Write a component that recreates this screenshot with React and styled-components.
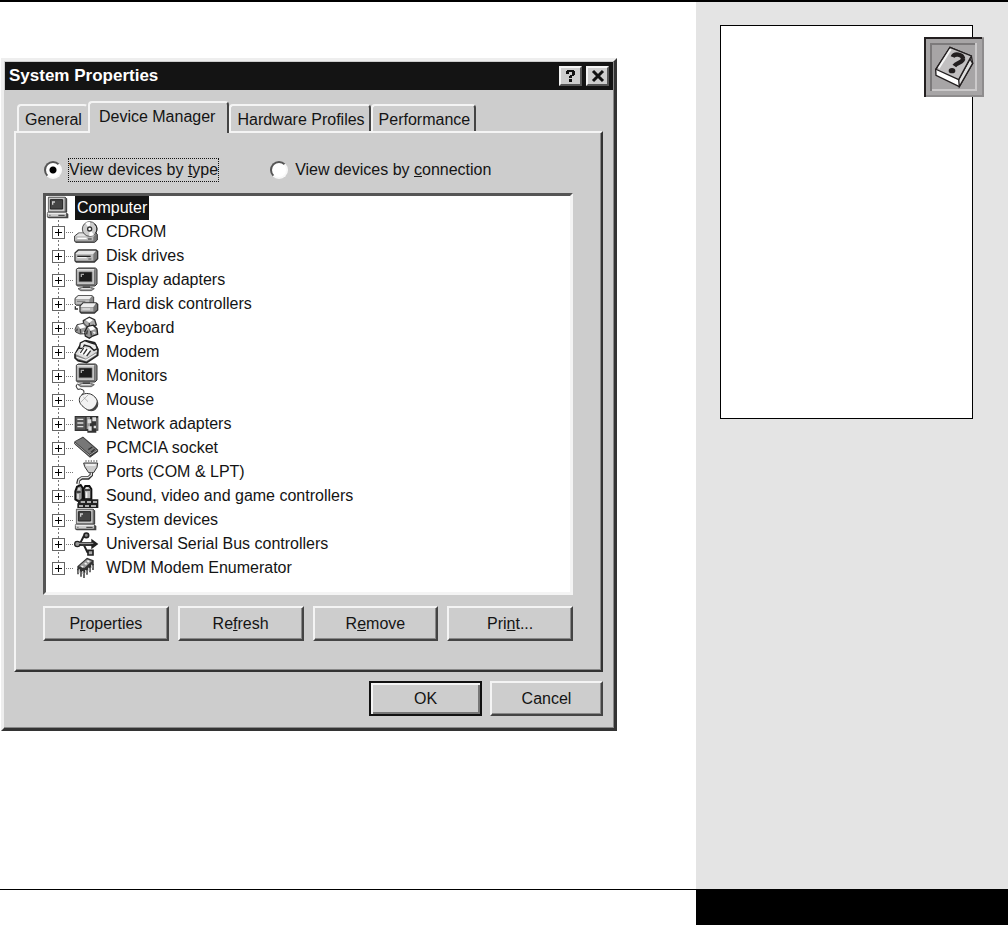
import { useState } from "react";
import styled, { createGlobalStyle } from "styled-components";

const GlobalStyle = createGlobalStyle`
  *,
  *::before,
  *::after {
    box-sizing: border-box;
  }
  body {
    margin: 0;
    background: #fff;
  }
  body, button, input {
    font-family: "Liberation Sans", Arial, sans-serif;
    font-size: 16px;
    line-height: 20px;
    color: #141414;
  }
`;

// every icon is drawn on a 72 x 72 grid
const MonitorIcon = () => (
  <>
    <path d="M7 4 13 0H64L69 4V48L63 54H10L7 50Z" fill="#8c8c8c" stroke="#333" strokeWidth="3" />
    <path d="M8 3H62V50H8Z" fill="#c4c4c4" stroke="#444" strokeWidth="2" />
    <path d="M9 5H61" stroke="#eee" strokeWidth="3" />
    <path d="M15 12H54V41H15Z" fill="#1c1c1c" stroke="#666" strokeWidth="2" />
    <path d="M20 17H30V21H24V27H20Z" fill="#aaa" />
    <path d="M26 55H48V60H26Z" fill="#444" />
    <path d="M12 62 20 59H54L61 62 52 68H20Z" fill="#999" stroke="#333" strokeWidth="2" />
    <path d="M22 62H50" stroke="#eee" strokeWidth="3" />
  </>
);

const ComputerIcon = () => (
  <>
    <path d="M8 4H58L62 8V48H8Z" fill="#777" stroke="#333" strokeWidth="3" />
    <path d="M7 4H57V47H7Z" fill="#c8c8c8" stroke="#555" strokeWidth="2" />
    <path d="M13 11H50V39H13Z" fill="#444" stroke="#222" strokeWidth="3" />
    <path d="M18 16H27V20H22V26H18Z" fill="#ccc" />
    <path d="M4 50H62L67 54V67H8L4 64Z" fill="#444" />
    <path d="M4 50H61V63H4Z" fill="#ccc" stroke="#444" strokeWidth="2" />
    <path d="M5 52H60" stroke="#f4f4f4" strokeWidth="3" />
    <path d="M37 58H56" stroke="#333" strokeWidth="3" />
    <path d="M9 58H14" stroke="#777" strokeWidth="3" />
  </>
);

const icons = {
  computer: <ComputerIcon />,
  system: <ComputerIcon />,
  display: <MonitorIcon />,
  monitor: <MonitorIcon />,
  cdrom: (
    <>
      <path d="M2 48 14 39H66L70 43V60L62 67H5L2 63Z" fill="#777" stroke="#333" strokeWidth="3" />
      <path d="M3 49 15 40H66L58 50H3Z" fill="#e2e2e2" />
      <path d="M3 50H58V62H3Z" fill="#bbb" />
      <path d="M10 55H38" stroke="#fff" strokeWidth="4" />
      <path d="M42 57H53" stroke="#333" strokeWidth="3" />
      <circle cx="47" cy="27" r="22" fill="#ccc" stroke="#555" strokeWidth="3" />
      <path d="M47 27 34 9A22 22 0 0 1 48 6Z M47 27 60 45A22 22 0 0 1 46 48Z" fill="#fff" />
      <path d="M62 12A22 22 0 0 1 65 39" fill="none" stroke="#222" strokeWidth="3" />
      <circle cx="47" cy="27" r="6" fill="#fff" stroke="#333" strokeWidth="4" />
    </>
  ),
  disk: (
    <>
      <path d="M3 27 13 18H66L71 22V44L61 54H7L3 50Z" fill="#777" stroke="#333" strokeWidth="4" />
      <path d="M5 28 14 20H66L58 30H5Z" fill="#e4e4e4" />
      <path d="M5 30H58V50H5Z" fill="#bcbcbc" />
      <path d="M10 37H50" stroke="#222" strokeWidth="4" />
      <path d="M10 41H38" stroke="#fff" strokeWidth="3" />
      <path d="M43 45H52" stroke="#555" strokeWidth="3" />
    </>
  ),
  controller: (
    <>
      <path d="M3 19 12 11H54L59 15V33L48 40H7L3 36Z" fill="#888" stroke="#444" strokeWidth="3" />
      <path d="M5 20 13 12H54L46 22H5Z" fill="#eee" />
      <path d="M5 23H46V36H5Z" fill="#bbb" />
      <path d="M9 28H34" stroke="#777" strokeWidth="3" />
      <path d="M18 43 27 33H66L71 37V54L61 63H22L18 59Z" fill="#777" stroke="#333" strokeWidth="4" />
      <path d="M20 43 28 34H66L58 45H20Z" fill="#eee" />
      <path d="M20 46H58V58H20Z" fill="#b8b8b8" />
      <path d="M25 51H48" stroke="#eee" strokeWidth="3" />
      <path d="M4 43V51H12" fill="none" stroke="#333" strokeWidth="4" />
    </>
  ),
  keyboard: (
    <>
      <path d="M28 14 46 4 62 11 67 27 48 36 29 28Z" fill="#aaa" stroke="#333" strokeWidth="4" />
      <path d="M34 12 46 6 57 12 46 20Z" fill="#fff" />
      <path d="M46 21V34" stroke="#444" strokeWidth="4" />
      <path d="M3 40 9 26 29 22 40 32 38 53 18 54 5 48Z" fill="#999" stroke="#444" strokeWidth="3" />
      <path d="M11 28 27 24 35 34 19 38Z" fill="#fff" />
      <path d="M19 39 20 52M10 38 8 45" stroke="#444" strokeWidth="4" />
      <path d="M32 48 40 32 58 28 69 38 71 55 56 60 46 67 34 60Z" fill="#999" stroke="#222" strokeWidth="4" />
      <path d="M42 33 56 30 64 39 50 44Z" fill="#fff" />
      <path d="M50 45 52 59M40 43 38 55" stroke="#333" strokeWidth="4" />
      <path d="M27 48 30 51M58 48 64 52" stroke="#eee" strokeWidth="5" />
    </>
  ),
  modem: (
    <>
      <path d="M3 43 18 17 36 2 62 8 72 28 71 46 38 68 12 62 3 54Z" fill="#888" stroke="#222" strokeWidth="5" />
      <path d="M4 42 36 56 70 34 62 21 22 17Z" fill="#ddd" />
      <path d="M16 25 19 9 32 2 48 8 65 13 70 26 60 31 48 20 31 15 27 25Z" fill="#eee" stroke="#222" strokeWidth="4" />
      <path d="M14 40 28 22 52 29 40 48Z" fill="#fff" />
      <path d="M29 24 19 39M39 27 28 43M50 32 38 48" stroke="#333" strokeWidth="4" />
      <path d="M8 52 36 61 66 42" fill="none" stroke="#f4f4f4" strokeWidth="4" />
    </>
  ),
  mouse: (
    <>
      <path d="M11-13 6-6 11 4 20 3 29 7 30 13 24 20 30 30" fill="none" stroke="#222" strokeWidth="3" />
      <path d="M16 34C17 20 34 13 49 18C63 23 73 37 71 51C68 69 50 73 35 62C24 54 15 46 16 34Z" fill="#f2f2f2" stroke="#333" strokeWidth="3" />
      <path d="M20 43 44 19M28 27 42 41" stroke="#999" strokeWidth="2" />
      <path d="M69 37C78 58 59 77 38 65C58 66 66 55 69 37Z" fill="#444" />
    </>
  ),
  network: (
    <>
      <path d="M2 12H73V56H67V62H40V57H2Z" fill="#333" />
      <path d="M5 15H34V53H5Z" fill="#555" />
      <path d="M10 22H28M10 33H28M10 44H28" stroke="#ddd" strokeWidth="4" />
      <path d="M38 15H48V51H38Z" fill="#999" />
      <path d="M41 22H52V34H41ZM55 16H66V28H55ZM43 43H53V56H43ZM59 41H66V49H59Z" fill="#ddd" />
      <path d="M69 18V53" stroke="#999" strokeWidth="3" />
    </>
  ),
  pcmcia: (
    <>
      <path d="M2 17 27 3 71 41V47L48 64 2 24Z" fill="#333" stroke="#222" strokeWidth="2" />
      <path d="M3 17 27 5 68 41 46 54Z" fill="#777" />
      <path d="M3 21 46 58 69 43" fill="none" stroke="#aaa" strokeWidth="3" />
      <path d="M43 41 55 33M51 49 62 40" stroke="#333" strokeWidth="4" />
    </>
  ),
  ports: (
    <>
      <path d="M34 3H71" stroke="#333" strokeWidth="3" strokeDasharray="4 4" />
      <path d="M29 9H71L69 22 59 38H44L32 20Z" fill="#ccc" stroke="#333" strokeWidth="3" />
      <path d="M35 15H65" stroke="#fff" strokeWidth="4" />
      <path d="M52 39V45L43 54H23L14 60 11 72" fill="none" stroke="#333" strokeWidth="10" />
      <path d="M52 38V45L42 53H23L15 59 12 72" fill="none" stroke="#e4e4e4" strokeWidth="4" />
    </>
  ),
  sound: (
    <>
      <path d="M4 22 9 8 20 3 26 12V44L17 54 4 46Z" fill="#999" stroke="#111" strokeWidth="6" />
      <path d="M29 14 34 6H46L52 15V46H30Z" fill="#bbb" stroke="#111" strokeWidth="6" />
      <path d="M7 24H20M33 18H48" stroke="#222" strokeWidth="5" />
      <path d="M15 12V19M39 10V15M12 30V44M38 25V42" stroke="#f4f4f4" strokeWidth="4" />
      <path d="M12 48H20V58H12ZM20 46H73V72H10V58H20Z" fill="#222" />
      <path d="M20 54H33M39 54H51M57 54H69M15 66H27M33 66H45M51 66H66" stroke="#ddd" strokeWidth="5" />
    </>
  ),
  usb: (
    <>
      <path d="M8 36H61M18 35 29 13H35M29 38 40 60H48" fill="none" stroke="#222" strokeWidth="6" />
      <path d="M18 36H58" stroke="#333" strokeWidth="12" />
      <circle cx="10" cy="36" r="8" fill="#999" stroke="#222" strokeWidth="4" />
      <circle cx="37" cy="10" r="7" fill="#888" stroke="#222" strokeWidth="5" />
      <path d="M42 55H57V69H42Z" fill="#aaa" stroke="#222" strokeWidth="5" />
      <path d="M52 20 73 36 52 52Z" fill="#222" />
      <path d="M14 34H58" stroke="#aaa" strokeWidth="3" />
    </>
  ),
  enumerator: (
    <>
      <path d="M10 31 39 5 59 13V26L30 50 10 42Z" fill="#333" />
      <path d="M15 31 39 10 54 15 31 36Z" fill="#999" />
      <path d="M22 31 28 33M32 22 38 25M40 14 46 17" stroke="#f4f4f4" strokeWidth="5" />
      <path d="M12 39V55M21 44V62M30 46V66M39 40V56M48 32V49M57 24V42" stroke="#222" strokeWidth="4" />
      <path d="M16 40V50M26 45V54M35 42V51M44 35V44M53 26V36" stroke="#ccc" strokeWidth="4" />
    </>
  ),
};

const devices = [
  { icon: "cdrom", name: "CDROM" },
  { icon: "disk", name: "Disk drives" },
  { icon: "display", name: "Display adapters" },
  { icon: "controller", name: "Hard disk controllers" },
  { icon: "keyboard", name: "Keyboard" },
  { icon: "modem", name: "Modem" },
  { icon: "monitor", name: "Monitors" },
  { icon: "mouse", name: "Mouse" },
  { icon: "network", name: "Network adapters" },
  { icon: "pcmcia", name: "PCMCIA socket" },
  { icon: "ports", name: "Ports (COM & LPT)" },
  { icon: "sound", name: "Sound, video and game controllers" },
  { icon: "system", name: "System devices" },
  { icon: "usb", name: "Universal Serial Bus controllers" },
  { icon: "enumerator", name: "WDM Modem Enumerator" },
];

const tabs = ["General", "Device Manager", "Hardware Profiles", "Performance"];

function DeviceIcon({ name }) {
  return (
    <IconSvg viewBox="0 0 72 72" aria-hidden="true">
      {icons[name]}
    </IconSvg>
  );
}

function HelpBook() {
  return (
    <HelpBadge type="button" aria-label="Help">
      <svg width="60" height="60" viewBox="0 0 180 180" aria-hidden="true">
        <path d="M0 0H180V180H0Z" fill="#a7a5a6" />
        <path d="M177 3V177H3" fill="none" stroke="#8e8c8d" strokeWidth="6" />
        <path d="M3 180V3H174" fill="none" stroke="#231f20" strokeWidth="6" />
        <path d="M21 162V21H156" fill="none" stroke="#7c7a7b" strokeWidth="6" />
        <path d="M24 159H156V18" fill="none" stroke="#cbc9ca" strokeWidth="6" />
        <path d="M78 31 142 57 146 79 106 149 36 115 35 97Z" fill="#fff" stroke="#231f20" strokeWidth="4" />
        <path d="M138 66 146 79 106 149 104 128Z" fill="#ddd" stroke="#231f20" strokeWidth="4" />
        <path d="M78 31 142 57 104 128 36 97Z" fill="#c2c0c1" stroke="#231f20" strokeWidth="4" />
        <path d="M80 37 44 94" stroke="#f4f4f4" strokeWidth="6" />
        <path d="M86 60C91 48 115 51 117 64C120 77 98 76 91 87" fill="none" stroke="#231f20" strokeWidth="13" />
        <ellipse cx="84" cy="101" rx="10" ry="8" fill="#231f20" />
      </svg>
    </HelpBadge>
  );
}

export default function App() {
  const [tab, setTab] = useState("Device Manager");
  const [view, setView] = useState("type");

  return (
    <Page>
      <GlobalStyle />
      <Main>
        <Dialog role="dialog" aria-labelledby="dialog-title">
          <TitleBar>
            <Title id="dialog-title">System Properties</Title>
            <CaptionButton type="button" aria-label="Help">
              <svg width="16" height="16" viewBox="0 0 16 16">
                <path d="M3 6V3H4V2H11V3H12V7H11V8H9V10H6V8H7V7H9V4H6V6ZM6 11H9V14H6Z" fill="#111" />
              </svg>
            </CaptionButton>
            <CaptionButton type="button" aria-label="Close">
              <svg width="16" height="16" viewBox="0 0 16 16">
                <path d="M3 3 13 13M13 3 3 13" stroke="#111" strokeWidth="3" />
              </svg>
            </CaptionButton>
          </TitleBar>
          <Body>
            <TabList role="tablist">
              {tabs.map((name) => (
                <Tab
                  key={name}
                  type="button"
                  role="tab"
                  aria-selected={tab === name}
                  $selected={tab === name}
                  onClick={() => setTab(name)}
                >
                  {name}
                </Tab>
              ))}
            </TabList>
            <Panel role="tabpanel">
              <ViewOptions>
                <Option>
                  <Radio
                    type="radio"
                    name="view"
                    checked={view === "type"}
                    onChange={() => setView("type")}
                  />
                  <OptionText $focused={view === "type"}>
                    View devices by <u>t</u>ype
                  </OptionText>
                </Option>
                <Option>
                  <Radio
                    type="radio"
                    name="view"
                    checked={view === "connection"}
                    onChange={() => setView("connection")}
                  />
                  <OptionText $focused={view === "connection"}>
                    View devices by <u>c</u>onnection
                  </OptionText>
                </Option>
              </ViewOptions>
              <Tree>
                <RootRow>
                  <DeviceIcon name="computer" />
                  <SelectedName>Computer</SelectedName>
                </RootRow>
                <Branch>
                  {devices.map((device) => (
                    <Row key={device.name}>
                      <Rail>
                        <Expander type="button" aria-label={`Expand ${device.name}`} />
                      </Rail>
                      <Twig />
                      <DeviceIcon name={device.icon} />
                      <Name>{device.name}</Name>
                    </Row>
                  ))}
                </Branch>
              </Tree>
              <Actions>
                <PushButton type="button"><span>P<u>r</u>operties</span></PushButton>
                <PushButton type="button"><span>Re<u>f</u>resh</span></PushButton>
                <PushButton type="button"><span>R<u>e</u>move</span></PushButton>
                <PushButton type="button"><span>Pri<u>n</u>t...</span></PushButton>
              </Actions>
            </Panel>
            <Footer>
              <DialogButton type="button" $primary>OK</DialogButton>
              <DialogButton type="button">Cancel</DialogButton>
            </Footer>
          </Body>
        </Dialog>
      </Main>
      <Sidebar>
        <Note>
          <HelpBook />
        </Note>
      </Sidebar>
      <PageFoot />
      <PageFoot $dark />
    </Page>
  );
}

const Page = styled.div`
  display: grid;
  grid-template-columns: minmax(0, 1fr) 312px;
  grid-template-rows: 1fr 36px;
  min-height: 100vh;
  border-top: 2px solid #000;
`;

const Main = styled.main`
  padding: 56px 79px 56px 1px;
`;

const Sidebar = styled.aside`
  padding: 23px 35px 23px 24px;
  background: #e4e4e4;
`;

const Note = styled.section`
  position: relative;
  height: 394px;
  border: 1px solid #000;
  background: #fff;
`;

const HelpBadge = styled.button`
  position: absolute;
  top: 11px;
  right: -12px;
  width: 60px;
  height: 60px;
  padding: 0;
  border: 0;
  background: none;

  svg {
    display: block;
  }
`;

const PageFoot = styled.div`
  border-top: 1px solid #000;
  background: ${({ $dark }) => ($dark ? "#000" : "#fff")};
`;

const Dialog = styled.div`
  padding: 1px 2px;
  background: #cdcdcd;
  border: 3px solid;
  border-color: #eee #333 #333 #eee;
  box-shadow: inset -1px -1px #888, inset 1px 1px #cdcdcd;
`;

const TitleBar = styled.header`
  display: flex;
  align-items: center;
  gap: 4px;
  height: 28px;
  margin: 0 -1px;
  padding: 0 4px;
  background: #141414;
`;

const Title = styled.h1`
  flex: 1;
  margin: 0;
  font-size: 17px;
  font-weight: bold;
  line-height: 20px;
  color: #fff;
`;

const CaptionButton = styled.button`
  display: grid;
  place-items: center;
  width: 23px;
  height: 20px;
  padding: 0;
  border: 2px solid;
  border-color: #f4f4f4 #555 #555 #f4f4f4;
  background: #cdcdcd;
`;

const Body = styled.div`
  padding: 11px 9px 11px 8px;
`;

const TabList = styled.div`
  display: flex;
  align-items: flex-end;
  padding-left: 3px;
`;

const Tab = styled.button`
  position: relative;
  z-index: ${({ $selected }) => ($selected ? 1 : 0)};
  height: ${({ $selected }) => ($selected ? "32px" : "27px")};
  margin-bottom: ${({ $selected }) => ($selected ? "-2px" : "0")};
  padding: ${({ $selected }) => ($selected ? "0 12px 2px 9px" : "2px 4px 0 6px")};
  border: 2px solid;
  border-color: #f4f4f4 #444 transparent #f4f4f4;
  border-bottom: 0;
  border-radius: 4px 4px 0 0;
  background: #cdcdcd;
  white-space: nowrap;

  &:first-child {
    border-right-color: #cdcdcd;
  }
`;

const Panel = styled.section`
  padding: 22px 28px 29px 27px;
  border: 2px solid;
  border-color: #f4f4f4 #333 #333 #f4f4f4;
  box-shadow: inset -1px -1px #888;
`;

const ViewOptions = styled.div`
  display: flex;
  gap: 52px;
  padding: 4px 0 12px 1px;
`;

const Option = styled.label`
  display: flex;
  align-items: center;
  gap: 7px;
`;

const Radio = styled.input`
  appearance: none;
  width: 18px;
  height: 18px;
  margin: 0;
  border: 2px solid;
  border-color: #555 #f8f8f8 #f8f8f8 #555;
  border-radius: 50%;
  background: #fff;

  &:checked {
    background: radial-gradient(circle, #000 3px, #fff 4px);
  }
`;

const OptionText = styled.span`
  padding: 1px 0;
  outline: ${({ $focused }) => ($focused ? "1px dotted #111" : "none")};
`;

const Tree = styled.div`
  min-height: 402px;
  border: 3px solid;
  border-color: #555 #f4f4f4 #f4f4f4 #555;
  background: #fff;
`;

const RootRow = styled.div`
  display: flex;
  align-items: center;
  gap: 5px;
  height: 24px;
`;

const SelectedName = styled.span`
  padding: 2px;
  background: #141414;
  color: #fff;
`;

const Branch = styled.ul`
  margin: 0;
  padding: 0 0 0 6px;
  list-style: none;
`;

const Row = styled.li`
  display: flex;
  align-items: center;
  height: 24px;
`;

const Rail = styled.span`
  display: flex;
  align-items: center;
  height: 24px;
  background: repeating-linear-gradient(#777 0 2px, #fff 2px 4px) 6px 0 / 1px 100% no-repeat;

  li:last-child > & {
    background-size: 1px 12px;
  }
`;

const Expander = styled.button`
  width: 13px;
  height: 13px;
  padding: 0;
  border: 1px solid #666;
  background:
    linear-gradient(#000, #000) center / 7px 1px no-repeat,
    linear-gradient(#000, #000) center / 1px 7px no-repeat,
    #fff;
`;

const Twig = styled.span`
  width: 9px;
  height: 1px;
  background: repeating-linear-gradient(90deg, #fff 0 1px, #777 1px 2px);
`;

const IconSvg = styled.svg`
  flex: none;
  width: 24px;
  height: 24px;
  overflow: visible;
`;

const Name = styled.span`
  padding-left: 8px;
`;

const Actions = styled.div`
  display: flex;
  gap: 9px;
  padding-top: 11px;
`;

const PushButton = styled.button`
  flex: 1;
  height: 35px;
  padding: 0;
  border: 2px solid;
  border-color: #f4f4f4 #444 #444 #f4f4f4;
  background: #cdcdcd;
  box-shadow: inset -1px -1px #888;
`;

const Footer = styled.footer`
  display: flex;
  justify-content: flex-end;
  gap: 8px;
  padding-top: 9px;
`;

const DialogButton = styled(PushButton)`
  flex: none;
  width: 113px;
  border-color: ${({ $primary }) => ($primary ? "#111" : "#f4f4f4 #444 #444 #f4f4f4")};
  box-shadow: ${({ $primary }) =>
    $primary ? "inset 2px 2px #f4f4f4, inset -2px -2px #777" : "inset -1px -1px #888"};
`;
